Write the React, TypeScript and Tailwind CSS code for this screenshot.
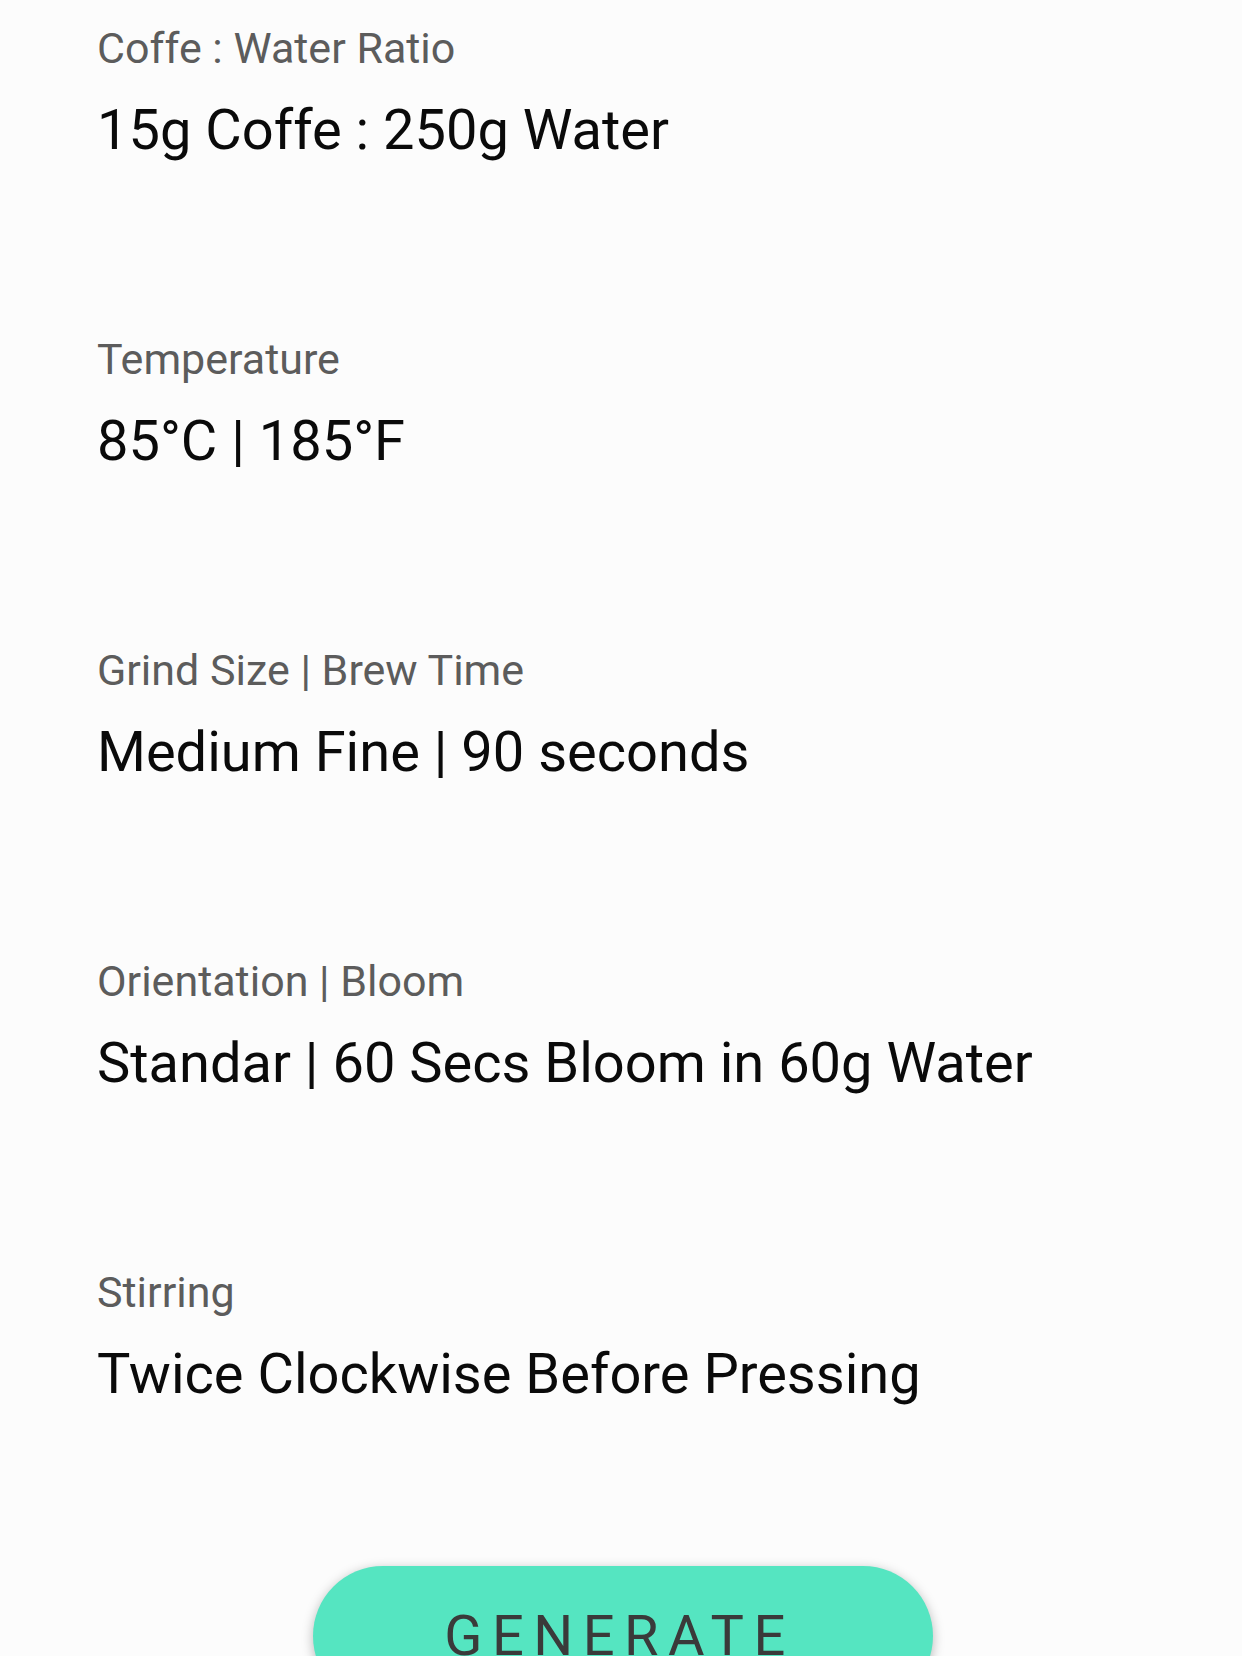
import React from "react";

const items = [
  { label: "Coffe : Water Ratio", value: "15g Coffe : 250g Water" },
  { label: "Temperature", value: "85°C | 185°F" },
  { label: "Grind Size | Brew Time", value: "Medium Fine | 90 seconds" },
  { label: "Orientation | Bloom", value: "Standar | 60 Secs Bloom in 60g Water" },
  { label: "Stirring", value: "Twice Clockwise Before Pressing" },
];

export default function App() {
  return (
    <div
      className="min-h-[1656px] w-full bg-[#fcfcfc] overflow-hidden"
      style={{ fontFamily: "Roboto, 'Noto Sans', sans-serif" }}
    >
      <div className="flex flex-col pl-[97px] pt-[27px]">
        {items.map((it, i) => (
          <div key={i} className={i === 0 ? "flex flex-col" : "flex flex-col mt-[180px]"}>
            <div className="text-[43px] leading-[42px] text-[#5c5c5c]">{it.label}</div>
            <div className="mt-[33px] text-[56px] leading-[56px] text-[#0a0a0a]">{it.value}</div>
          </div>
        ))}
      </div>
      <div className="flex justify-center pt-[164px]">
        <button className="ml-[3px] h-[140px] w-[620px] rounded-full bg-[#55e5c1] shadow-[0_3px_12px_rgba(0,0,0,0.28)] flex items-center justify-center">
          <span className="pr-[6px] text-[56px] leading-none tracking-[9.5px] text-[#3a3a3a]">GENERATE</span>
        </button>
      </div>
    </div>
  );
}
